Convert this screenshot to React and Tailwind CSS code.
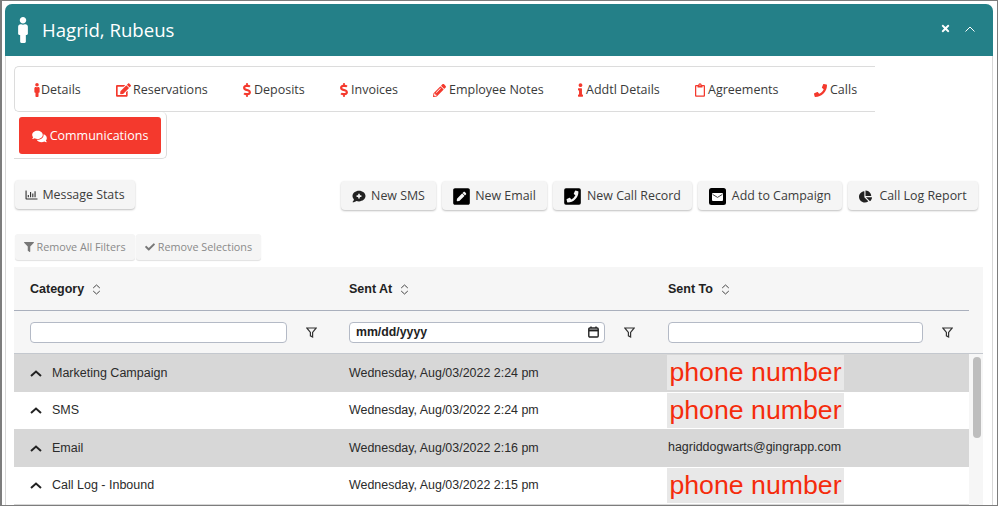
import React from "react";
import {
  FaMale,
  FaEdit,
  FaDollarSign,
  FaPencilAlt,
  FaInfo,
  FaRegClipboard,
  FaPhone,
  FaComments,
  FaTimes,
  FaCheck,
  FaFilter,
  FaChartPie,
  FaPenSquare,
  FaPhoneSquareAlt,
  FaRegChartBar,
  FaCommentMedical,
} from "react-icons/fa";

const tabs = [
  { label: "Details", icon: <FaMale className="w-[8px] h-[14px]" />, width: "w-[101px] pl-[18px]" },
  { label: "Reservations", icon: <FaEdit className="w-[15px] h-[14px] mr-[2px]" />, width: "w-[127px]" },
  { label: "Deposits", icon: <FaDollarSign className="w-[8px] h-[14px] mr-[3px]" />, width: "w-[97px]" },
  { label: "Invoices", icon: <FaDollarSign className="w-[8px] h-[14px] mr-[3px]" />, width: "w-[93px]" },
  { label: "Employee Notes", icon: <FaPencilAlt className="w-[13px] h-[13px] mr-[3px]" />, width: "w-[145px]" },
  { label: "Addtl Details", icon: <FaInfo className="w-[5px] h-[14px] mr-[3px]" />, width: "w-[117px]" },
  { label: "Agreements", icon: <FaRegClipboard className="w-[10px] h-[14px] mr-[3px]" />, width: "w-[119px]" },
  { label: "Calls", icon: <FaPhone className="w-[13px] h-[13px] mr-[3px]" />, width: "w-[60px]" },
];

const rows = [
  { category: "Marketing Campaign", sent: "Wednesday, Aug/03/2022 2:24 pm", phone: true, bg: "bg-[#d7d7d7]" },
  { category: "SMS", sent: "Wednesday, Aug/03/2022 2:24 pm", phone: true, bg: "bg-white" },
  { category: "Email", sent: "Wednesday, Aug/03/2022 2:16 pm", to: "hagriddogwarts@gingrapp.com", bg: "bg-[#d7d7d7]" },
  { category: "Call Log - Inbound", sent: "Wednesday, Aug/03/2022 2:15 pm", phone: true, bg: "bg-white" },
];

function SortIcon() {
  return (
    <svg width="9" height="11" viewBox="0 0 9 11" fill="none" stroke="#444" strokeWidth="1" className="ml-[8px]">
      <path d="M1.2 4 L4.5 1 L7.8 4" />
      <path d="M1.2 7 L4.5 10 L7.8 7" />
    </svg>
  );
}

function FunnelIcon() {
  return (
    <svg width="11" height="11" viewBox="0 0 11 11" fill="none" stroke="#333" strokeWidth="1.2">
      <path d="M0.8 1 H10.2 L6.6 5.4 V10 L4.4 8.8 V5.4 Z" />
    </svg>
  );
}

function MailSquare() {
  return (
    <svg width="17" height="17" viewBox="0 0 17 17">
      <rect width="17" height="17" rx="2.5" fill="#000" />
      <rect x="3" y="5" width="11" height="8" rx="1" fill="#fff" />
      <path d="M3.6 6.4 L8.5 9.4 L13.4 6.4" fill="none" stroke="#333" strokeWidth="0.9" />
    </svg>
  );
}

function ActionButton({ icon, label, className }) {
  return (
    <button className={`h-[29px] pt-px flex items-center justify-center bg-[#f5f5f5] rounded-[4px] shadow-[0_1px_2px_rgba(0,0,0,0.25)] text-[12.4px] text-[#3c3c3c] ${className}`}>
      {icon}
      {label}
    </button>
  );
}

function FilterCell({ children }) {
  return (
    <div className="flex items-center pl-[16px]">
      {children}
      <span className="ml-[19px] mt-px">
        <FunnelIcon />
      </span>
    </div>
  );
}

export default function App() {
  return (
    <div className="h-[506px] overflow-hidden bg-white border-t border-l-2 border-r border-b border-[#7d7d7d] pl-[3px] pr-[4px] pt-[3px] font-['Open_Sans',sans-serif]">
      <div className="h-full border-x border-[#d8d8d8] rounded-t-[7px]">
        <div className="h-[52px] -mx-px bg-[#248088] rounded-t-[7px] flex items-center text-white">
          <FaMale className="w-[14px] h-[26px] ml-[11px]" />
          <span className="text-[18.6px] ml-[12px]">Hagrid, Rubeus</span>
          <div className="ml-auto flex items-center gap-[14px] mr-[18px] mt-[-3px]">
            <FaTimes className="w-[11px] h-[11px]" />
            <svg width="10" height="6" viewBox="0 0 10 6" fill="none" stroke="#fff" strokeWidth="1">
              <path d="M0.5 5.5 L5 1 L9.5 5.5" />
            </svg>
          </div>
        </div>

        <div className="pl-[8px] pt-[10px]">
          <div className="w-[861px] h-[46px] pt-[2px] flex items-center border border-r-0 border-[#dcdcdc] rounded-l-[5px] text-[12.5px] text-[#3a3a3a]">
            {tabs.map((tab) => (
              <div key={tab.label} className={`flex items-center shrink-0 ${tab.width}`}>
                <span className="text-[#f4392d] flex">{tab.icon}</span>
                {tab.label}
              </div>
            ))}
          </div>
          <div className="w-[153px] h-[47px] flex items-center border-r border-b border-[#dcdcdc] rounded-br-[5px] rounded-tr-[5px] pl-[5px]">
            <button className="w-[142px] h-[37px] pt-[2px] bg-[#f4392d] rounded-[3px] text-white text-[12.5px] flex items-center justify-center">
              <FaComments className="w-[15px] h-[13px] mr-[3px]" />
              Communications
            </button>
          </div>

          <div className="flex items-start justify-between pl-px pr-[14px] mt-[21px]">
            <ActionButton
              className="w-[120px]"
              icon={<FaRegChartBar className="w-[13px] h-[12px] mr-[4px] text-[#333]" />}
              label="Message Stats"
            />
            <div className="flex gap-[6px] mt-px">
              <ActionButton className="w-[95px]" icon={<FaCommentMedical className="w-[14px] h-[13px] mr-[5px] text-[#222]" />} label="New SMS" />
              <ActionButton className="w-[105px]" icon={<FaPenSquare className="w-[17px] h-[19px] mr-[5px] text-black" />} label="New Email" />
              <ActionButton className="w-[139px]" icon={<FaPhoneSquareAlt className="w-[17px] h-[19px] mr-[6px] text-black -scale-x-100" />} label="New Call Record" />
              <ActionButton className="w-[144px]" icon={<span className="mr-[6px]"><MailSquare /></span>} label="Add to Campaign" />
              <ActionButton className="w-[130px]" icon={<FaChartPie className="w-[13px] h-[13px] mr-[7px] text-[#222]" />} label="Call Log Report" />
            </div>
          </div>

          <div className="flex gap-px pl-px mt-[24px]">
            <button className="w-[120px] h-[26px] bg-[#f5f5f5] rounded-[3px] shadow-[0_1px_1px_rgba(0,0,0,0.12)] text-[10.8px] text-[#8a8a8a] flex items-center justify-center">
              <FaFilter className="w-[10px] h-[10px] mr-[2px] text-[#777]" />
              Remove All Filters
            </button>
            <button className="w-[125px] h-[26px] bg-[#f5f5f5] rounded-[3px] shadow-[0_1px_1px_rgba(0,0,0,0.12)] text-[10.8px] text-[#8a8a8a] flex items-center justify-center">
              <FaCheck className="w-[10px] h-[10px] mr-[3px] text-[#777]" />
              Remove Selections
            </button>
          </div>

          <div className="w-[969px] mt-[7px] bg-[#f6f6f6] font-['Liberation_Sans',sans-serif]">
            <div className="w-[955px]">
              <div className="h-[44px] pt-[2px] grid grid-cols-[319px_319px_317px] items-center border-b border-[#aab0bd] text-[12.5px] font-bold text-[#222]">
                <div className="pl-[16px] flex items-center">Category <SortIcon /></div>
                <div className="pl-[16px] flex items-center">Sent At <SortIcon /></div>
                <div className="pl-[16px] flex items-center">Sent To <SortIcon /></div>
              </div>
              <div className="h-[42px] grid grid-cols-[319px_319px_317px] items-center">
                <FilterCell>
                  <input className="w-[257px] h-[21px] bg-white border border-[#b4bac6] rounded-[4px]" />
                </FilterCell>
                <FilterCell>
                  <div className="w-[256px] h-[21px] bg-white border border-[#b4bac6] rounded-[4px] flex items-center justify-between pl-[6px] pr-[5px] text-[12.3px] font-bold text-[#222]">
                    mm/dd/yyyy
                    <svg width="11" height="12" viewBox="0 0 11 12" fill="none" stroke="#222" strokeWidth="1.4">
                      <rect x="0.8" y="2" width="9.4" height="9" rx="1" />
                      <path d="M0.8 4.4 H10.2" strokeWidth="2" />
                      <path d="M3 0.5 V2 M8 0.5 V2" />
                    </svg>
                  </div>
                </FilterCell>
                <FilterCell>
                  <input className="w-[255px] h-[21px] bg-white border border-[#b4bac6] rounded-[4px]" />
                </FilterCell>
              </div>
            </div>

            <div className="flex border-t border-[#c4c8ce]">
              <div className="w-[955px]">
                {rows.map((row) => (
                  <div key={row.category} className={`h-[37.5px] grid grid-cols-[319px_319px_317px] items-center text-[#2b2b2b] ${row.bg}`}>
                    <div className="flex items-center pl-[16px] pt-px text-[12.5px]">
                      <svg width="12" height="7" viewBox="0 0 12 7" fill="none" stroke="#222" strokeWidth="2" className="mr-[10px]">
                        <path d="M1 6 L6 1.5 L11 6" />
                      </svg>
                      {row.category}
                    </div>
                    <div className="pl-[16px] pt-px text-[12.45px]">{row.sent}</div>
                    <div className="pl-[15px]">
                      {row.phone ? (
                        <span className="block w-[177px] h-[35px] bg-[#e8e8e8] text-[#f52c0c] text-[26.7px] leading-[35px] text-center whitespace-nowrap">
                          phone number
                        </span>
                      ) : (
                        <span className="block pl-px text-[12.45px]">{row.to}</span>
                      )}
                    </div>
                  </div>
                ))}
                <div className="h-[10px] bg-[#d7d7d7]" />
              </div>
              <div className="w-[14px] bg-[#f6f6f6] pt-[3px] pl-[4px]">
                <div className="w-[8px] h-[81px] rounded-full bg-[#bdbdbd]" />
              </div>
            </div>
          </div>
        </div>
      </div>
    </div>
  );
}
